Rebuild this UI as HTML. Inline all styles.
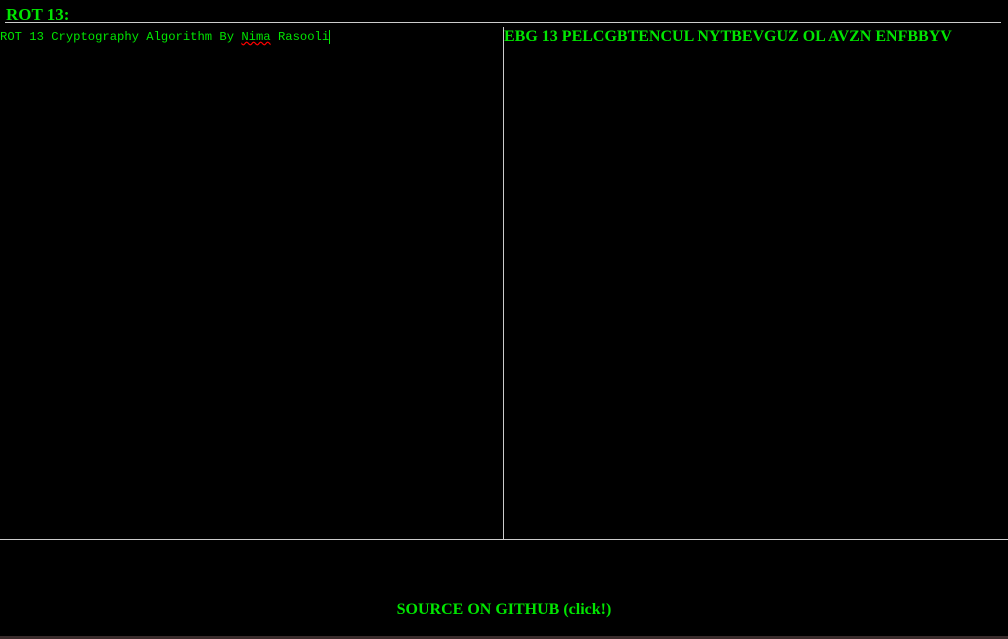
<!DOCTYPE html>
<html><head><style>
html,body{margin:0;padding:0;background:#000;width:1008px;height:639px;overflow:hidden;position:relative}
.g{color:#00e600}
.b{font-family:"Liberation Serif",serif;font-weight:700}
#h{position:absolute;left:6px;top:5px;font-size:17px;}
#hl{position:absolute;left:5px;top:22px;width:996px;height:1px;background:#ccc}
#l{position:absolute;left:0;top:30px;font-family:"Liberation Mono",monospace;font-size:12.2px;white-space:pre}
#vl{position:absolute;left:503px;top:27px;width:1px;height:512px;background:#ccc}
#r{position:absolute;left:504px;top:28px;font-size:16px;white-space:nowrap}
#bl{position:absolute;left:0;top:539px;width:1008px;height:1px;background:#ccc}
#f{position:absolute;left:0;width:1008px;text-align:center;top:601px;font-size:16px}
#s{position:absolute;left:0;top:636px;width:1008px;height:3px;background:#3a2c2c}
</style></head><body>
<div id="h" class="g b">ROT 13:</div>
<div id="hl"></div>
<div id="l" class="g">ROT 13 Cryptography Algorithm By <span style="text-decoration:underline wavy red">Nima</span> Rasooli<span style="border-left:1px solid #0e0"></span></div>
<div id="vl"></div>
<div id="r" class="g b">EBG 13 PELCGBTENCUL NYTBEVGUZ OL AVZN ENFBBYV</div>
<div id="bl"></div>
<div id="f" class="g b">SOURCE ON GITHUB (click!)</div>
<div id="s"></div>
</body></html>
